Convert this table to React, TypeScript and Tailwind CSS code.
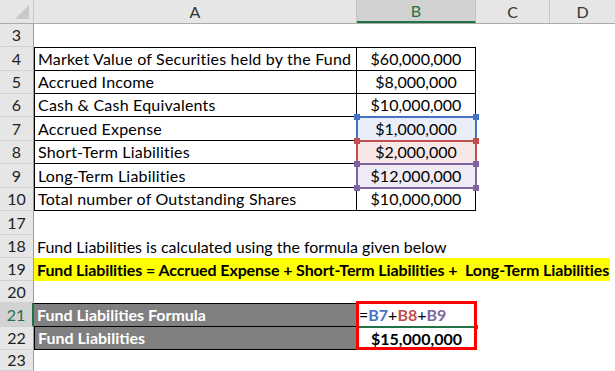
import React from "react";

const font = { fontFamily: "Lato, 'Open Sans', sans-serif" };

type RowProps = {
  n: string;
  h: string;
  active?: boolean;
  children?: React.ReactNode;
};

function Row({ n, h, active, children }: RowProps) {
  return (
    <div className={`flex ${h}`}>
      <div
        className={
          active
            ? "w-[34px] shrink-0 flex items-center justify-center bg-[#d2d2d2] text-[#217346] border-r-2 border-r-[#217346] border-b border-b-[#d0d0d0] text-[16px]"
            : "w-[34px] shrink-0 flex items-center justify-center bg-[#e6e6e6] text-[#222] border-r border-r-[#9b9b9b] border-b border-b-[#d0d0d0] text-[16px]"
        }
      >
        {n}
      </div>
      {children}
    </div>
  );
}

const items = [
  { n: "4", h: "h-[24px]", label: "Market Value of Securities held by the Fund", value: "$60,000,000", fill: "" },
  { n: "5", h: "h-[23px]", label: "Accrued Income", value: "$8,000,000", fill: "" },
  { n: "6", h: "h-[23px]", label: "Cash & Cash Equivalents", value: "$10,000,000", fill: "" },
  { n: "7", h: "h-[24px]", label: "Accrued Expense", value: "$1,000,000", fill: "bg-[#e9eef8]" },
  { n: "8", h: "h-[23px]", label: "Short-Term Liabilities", value: "$2,000,000", fill: "bg-[#f8e7e7]" },
  { n: "9", h: "h-[24px]", label: "Long-Term Liabilities", value: "$12,000,000", fill: "bg-[#efebf6]" },
  { n: "10", h: "h-[23px]", label: "Total number of Outstanding Shares", value: "$10,000,000", fill: "" },
];

function RangeBox({ pos, border, bg }: { pos: string; border: string; bg: string }) {
  const sq = `absolute w-[6px] h-[6px] ${bg}`;
  return (
    <div className={`absolute pointer-events-none border-2 ${border} ${pos}`}>
      <div className={`${sq} -left-[4px] -top-[4px]`} />
      <div className={`${sq} -right-[4px] -top-[4px]`} />
      <div className={`${sq} -left-[4px] -bottom-[4px]`} />
      <div className={`${sq} -right-[4px] -bottom-[4px]`} />
    </div>
  );
}

export default function App() {
  return (
    <div className="relative w-[615px] h-[371px] overflow-hidden bg-white text-black text-[16px]" style={font}>
      {/* column headers */}
      <div className="flex h-[24px] bg-[#e6e6e6] border-b border-[#ababab] text-[#333]">
        <div className="w-[34px] shrink-0 relative border-r border-[#c6c6c6]">
          <div className="absolute right-[4px] bottom-[4px] w-0 h-0 border-l-[14px] border-l-transparent border-b-[14px] border-b-[#c9c9c9]" />
        </div>
        <div className="w-[323px] shrink-0 flex items-center justify-center border-r border-[#c6c6c6]">A</div>
        <div className="w-[119px] shrink-0 flex items-center justify-center bg-[#d2d2d2] text-[#217346] border-b-2 border-[#217346] border-r border-r-[#c6c6c6]">B</div>
        <div className="w-[74px] shrink-0 flex items-center justify-center border-r border-[#c6c6c6]">C</div>
        <div className="flex-1 flex items-center justify-center">D</div>
      </div>

      <Row n="3" h="h-[23px]" />

      {items.map((it, i) => (
        <Row key={it.n} n={it.n} h={it.h}>
          <div
            className={`w-[323px] shrink-0 flex items-center pl-[3px] border-l border-r border-b border-black whitespace-nowrap tracking-[0.2px] ${i === 0 ? "border-t" : ""}`}
          >
            {it.label}
          </div>
          <div
            className={`w-[119px] shrink-0 flex items-center justify-center border-r border-b border-black ${it.fill} ${i === 0 ? "border-t" : ""}`}
          >
            {it.value}
          </div>
        </Row>
      ))}

      <Row n="17" h="h-[24px]" />
      <Row n="18" h="h-[23px]">
        <div className="flex-1 flex items-center pl-[3px] whitespace-nowrap">
          Fund Liabilities is calculated using the formula given below
        </div>
      </Row>
      <Row n="19" h="h-[23px]">
        <div className="w-[576px] shrink-0 flex items-center pl-[3px] bg-[#ffff00] font-bold whitespace-nowrap tracking-[-0.1px]">
          Fund Liabilities = Accrued Expense + Short-Term Liabilities +&nbsp; Long-Term Liabilities
        </div>
      </Row>
      <Row n="20" h="h-[22px]" />
      <Row n="21" h="h-[24px]" active>
        <div className="w-[323px] shrink-0 flex items-center pl-[3px] bg-[#808080] text-white font-bold border-t border-b border-black">
          Fund Liabilities Formula
        </div>
        <div className="w-[119px] shrink-0 flex items-center pl-[2px] font-bold">
          <span className="font-normal">=</span>
          <span className="text-[#4472c4]">B7</span>
          <span className="font-normal">+</span>
          <span className="text-[#c0504d]">B8</span>
          <span className="font-normal">+</span>
          <span className="text-[#8064a2]">B9</span>
        </div>
      </Row>
      <Row n="22" h="h-[23px]">
        <div className="w-[323px] shrink-0 flex items-center pl-[3px] bg-[#808080] text-white font-bold border-b border-l border-black">
          Fund Liabilities
        </div>
        <div className="w-[119px] shrink-0 flex items-center justify-center font-bold">
          $15,000,000
        </div>
      </Row>
      <Row n="23" h="h-[21px]" />

      {/* reference highlights */}
      <RangeBox pos="left-[356px] top-[116px] w-[121px] h-[26px]" border="border-[#4472c4]" bg="bg-[#4472c4]" />
      <RangeBox pos="left-[356px] top-[140px] w-[121px] h-[25px]" border="border-[#c0504d]" bg="bg-[#c0504d]" />
      <RangeBox pos="left-[356px] top-[163px] w-[121px] h-[26px]" border="border-[#8064a2]" bg="bg-[#8064a2]" />

      {/* edit cell underline */}
      <div className="absolute left-[359px] top-[326px] w-[116px] h-[2px] bg-[#217346]" />
      <div className="absolute left-[474px] top-[325px] w-[4px] h-[4px] bg-[#217346]" />

      {/* red outline */}
      <div className="absolute left-[356px] top-[301px] w-[121px] h-[49px] border-[3px] border-[#ff0000] pointer-events-none" />
    </div>
  );
}
